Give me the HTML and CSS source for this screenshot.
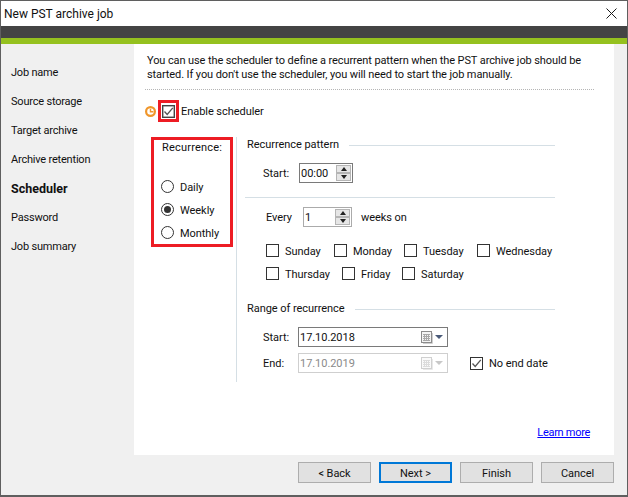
FILE: index.html
```html
<!DOCTYPE html>
<html lang="en">
<head>
<meta charset="utf-8">
<title>New PST archive job</title>
<link rel="stylesheet" href="styles.css">
</head>
<body>
<div class="window">
  <header class="titlebar">
    <span class="title">New PST archive job</span>
    <svg class="close" width="11" height="11" viewBox="0 0 11 11"><path d="M0.5 0.5L10.5 10.5M10.5 0.5L0.5 10.5" stroke="#1a1a1a" stroke-width="1" fill="none"/></svg>
  </header>
  <div class="band"></div>
  <div class="accent"></div>
  <div class="main">
    <nav class="sidebar">
      <div class="nav-item">Job name</div>
      <div class="nav-item">Source storage</div>
      <div class="nav-item">Target archive</div>
      <div class="nav-item">Archive retention</div>
      <div class="nav-item nav-active">Scheduler</div>
      <div class="nav-item">Password</div>
      <div class="nav-item">Job summary</div>
    </nav>
    <section class="content">
      <p class="intro">You can use the scheduler to define a recurrent pattern when the PST archive job should be<br>started. If you don't use the scheduler, you will need to start the job manually.</p>
      <div class="dotted"></div>
      <div class="enable-row">
        <svg class="clock" width="11" height="11" viewBox="0 0 11 11"><circle cx="5.5" cy="5.5" r="4.4" fill="none" stroke="#f0962a" stroke-width="2.2"/><path d="M5.5 2.8V5.7H8.4" fill="none" stroke="#f0962a" stroke-width="1.4"/></svg>
        <span class="red-check">
          <span class="check check-dark"><svg width="11" height="11" viewBox="0 0 11 11"><path d="M1.5 5.5L4.2 8.5L9.8 1.8" fill="none" stroke="#555" stroke-width="1.3"/></svg></span>
        </span>
        <span class="enable-label txt">Enable scheduler</span>
      </div>
      <div class="scheduler">
        <div class="recurrence">
          <div class="rec-title">Recurrence:</div>
          <div class="radio-row"><span class="radio"></span><span class="txt">Daily</span></div>
          <div class="radio-row"><span class="radio radio-on"></span><span class="txt">Weekly</span></div>
          <div class="radio-row"><span class="radio"></span><span class="txt">Monthly</span></div>
        </div>
        <div class="vline"></div>
        <div class="form">
          <div class="head"><span class="txt">Recurrence pattern</span><span class="head-line"></span></div>
          <div class="start-row">
            <span class="start-label txt">Start:</span>
            <span class="spin spin-time"><span class="spin-value txt">00:00</span><span class="spin-btns"><span class="spin-btn"><i class="tri-up"></i></span><span class="spin-btn"><i class="tri-down"></i></span></span></span>
          </div>
          <div class="rule"></div>
          <div class="every-row">
            <span class="every-label txt">Every</span>
            <span class="spin spin-num"><span class="spin-value txt">1</span><span class="spin-btns"><span class="spin-btn"><i class="tri-up"></i></span><span class="spin-btn"><i class="tri-down"></i></span></span></span>
            <span class="weeks txt">weeks on</span>
          </div>
          <div class="days days-first">
            <label class="day w68"><span class="check"></span><span class="txt">Sunday</span></label>
            <label class="day w70"><span class="check"></span><span class="txt">Monday</span></label>
            <label class="day w73"><span class="check"></span><span class="txt">Tuesday</span></label>
            <label class="day"><span class="check"></span><span class="txt">Wednesday</span></label>
          </div>
          <div class="days days-second">
            <label class="day w76"><span class="check"></span><span class="txt">Thursday</span></label>
            <label class="day w60"><span class="check"></span><span class="txt">Friday</span></label>
            <label class="day"><span class="check"></span><span class="txt">Saturday</span></label>
          </div>
          <div class="head head-range"><span class="txt">Range of recurrence</span><span class="head-line"></span></div>
          <div class="date-row date-first">
            <span class="date-label txt">Start:</span>
            <span class="date"><span class="date-text txt">17.10.2018</span>
              <svg class="cal" width="12" height="13" viewBox="0 0 12 13"><rect x="0.5" y="0.5" width="10" height="11" fill="#f4f4f4" stroke="#8c8c8c"/><path d="M2 3.5H9M2 5.5H9M2 7.5H9M2 9.5H9M3.5 3V10M5.5 3V10M7.5 3V10" stroke="#a8a8a8" stroke-width="1" fill="none"/><path d="M11.5 2V12.5H2" stroke="#cfcfcf" fill="none"/></svg>
              <i class="date-arrow"></i></span>
          </div>
          <div class="date-row date-second">
            <span class="date-label txt">End:</span>
            <span class="date date-off"><span class="date-text txt">17.10.2019</span>
              <svg class="cal" width="12" height="13" viewBox="0 0 12 13"><rect x="0.5" y="0.5" width="10" height="11" fill="#fafafa" stroke="#d0d0d0"/><path d="M2 3.5H9M2 5.5H9M2 7.5H9M2 9.5H9M3.5 3V10M5.5 3V10M7.5 3V10" stroke="#dcdcdc" stroke-width="1" fill="none"/><path d="M11.5 2V12.5H2" stroke="#e8e8e8" fill="none"/></svg>
              <i class="date-arrow"></i></span>
            <label class="no-end"><span class="check"><svg width="11" height="11" viewBox="0 0 11 11"><path d="M1.5 5.5L4.2 8.5L9.8 1.8" fill="none" stroke="#555" stroke-width="1.3"/></svg></span><span class="txt">No end date</span></label>
          </div>
        </div>
      </div>
      <a class="learn" href="#">Learn more</a>
    </section>
  </div>
  <footer class="footer">
    <button class="btn">&lt; Back</button>
    <button class="btn btn-default">Next &gt;</button>
    <button class="btn">Finish</button>
    <button class="btn">Cancel</button>
  </footer>
</div>
</body>
</html>
```
FILE: styles.css
```css
* { box-sizing: border-box; }
html, body { margin: 0; padding: 0; }
body { font: 11px/14px Roboto, "Noto Sans", sans-serif; letter-spacing: -0.05px; color: #111; background: #f0f0f0; }
.txt { padding-top: 2px; }
.window { width: 628px; height: 497px; border: 1px solid #5f5f5f; border-width: 1px 1px 2px 1px; display: flex; flex-direction: column; background: #f0f0f0; overflow: hidden; }
.titlebar { height: 25px; background: #fff; display: flex; align-items: center; justify-content: space-between; padding: 0 10px 0 3px; flex: none; }
.title { font-size: 12px; letter-spacing: 0; }
.close { display: block; }
.band { height: 12px; background: #444; flex: none; }
.accent { height: 6px; background: #95c11f; flex: none; }
.main { display: flex; height: 411px; flex: none; }
.sidebar { width: 133px; flex: none; padding: 22px 0 0 10px; letter-spacing: -0.2px; }
.nav-item { height: 29px; line-height: 14px; }
.nav-active { font-weight: 700; font-size: 12.5px; letter-spacing: 0; }
.content { width: 480px; background: #fff; flex: none; padding: 10px 0 0 0; display: flex; flex-direction: column; }
.intro { margin: 0 0 0 13px; line-height: 14px; white-space: nowrap; letter-spacing: -0.1px; }
.dotted { margin: 7px 20px 0 11px; height: 1px; border-top: 1px dotted #b5b5b5; }
.enable-row { display: flex; align-items: center; margin: 10px 0 0 11px; height: 22px; }
.clock { display: block; }
.red-check { width: 21px; height: 22px; border: 3px solid #ed1c24; margin-left: 2px; display: flex; align-items: center; justify-content: center; }
.enable-label { margin-left: 2px; }
.check { width: 13px; height: 13px; border: 1px solid #333; background: #fff; display: inline-flex; align-items: center; justify-content: center; flex: none; }
.check-dark { border-color: #444; box-shadow: inset 0 0 0 0.5px #666; }
.check svg { display: block; }
.scheduler { display: flex; margin: 15px 0 0 17px; }
.recurrence { width: 82px; height: 110px; border: 3px solid #ed1c24; flex: none; padding-left: 7px; }
.rec-title { margin: 0 0 20px 1px; padding-top: 1px; letter-spacing: 0.2px; }
.radio-row { display: flex; align-items: center; gap: 6px; height: 23px; white-space: nowrap; }
.radio { width: 13px; height: 13px; border: 1px solid #333; border-radius: 50%; background: #fff; display: block; flex: none; position: relative; }
.radio-on::after { content: ""; position: absolute; left: 2px; top: 2px; width: 7px; height: 7px; border-radius: 50%; background: #333; }
.vline { width: 1px; height: 245px; background: #d5dfe5; margin-left: 3px; flex: none; }
.form { margin-left: 10px; width: 308px; flex: none; }
.head { display: flex; align-items: center; height: 14px; }
.head-line { flex: 1; height: 1px; background: #d5dfe5; margin: 2px 0 0 10px; }
.start-row { display: flex; align-items: center; margin: 12px 0 0 16px; height: 20px; }
.start-label { width: 36px; flex: none; }
.spin { display: inline-flex; height: 20px; border: 1px solid #7a7a7a; background: #fff; align-items: center; justify-content: space-between; padding: 0 1px 0 1px; flex: none; }
.spin-time { width: 54px; }
.spin-num { width: 49px; border-color: #ababab; }
.spin-btns { display: flex; flex-direction: column; gap: 0; }
.spin-btn { width: 15px; height: 8px; background: #e6e6e6; border: 1px solid #b5b5b5; display: flex; align-items: center; justify-content: center; }
.tri-up { width: 0; height: 0; border: 3.5px solid transparent; border-top: 0; border-bottom: 4px solid #222; }
.tri-down { width: 0; height: 0; border: 3.5px solid transparent; border-bottom: 0; border-top: 4px solid #222; }
.rule { height: 1px; background: #d5dfe5; margin: 14px 0 0 -2px; }
.every-row { display: flex; align-items: center; margin: 9px 0 0 19px; height: 20px; }
.every-label { width: 37px; flex: none; }
.weeks { margin-left: 9px; }
.days { display: flex; margin-left: 19px; height: 13px; }
.days-first { margin-top: 17px; }
.days-second { margin-top: 10px; }
.day { display: flex; align-items: center; gap: 6px; flex: none; }
.w68 { width: 68px; }
.w70 { width: 70px; }
.w73 { width: 73px; }
.w76 { width: 76px; }
.w60 { width: 60px; }
.head-range { margin-top: 21px; }
.date-row { display: flex; align-items: center; margin-left: 16px; height: 20px; }
.date-first { margin-top: 12px; }
.date-second { margin-top: 6px; }
.date-label { width: 35px; flex: none; }
.date { width: 150px; height: 20px; border: 1px solid #7a7a7a; display: flex; align-items: center; padding: 0 4px 0 1px; background: #fff; flex: none; }
.date-text { flex: 1; }
.cal { display: block; margin-right: 1px; }
.date-arrow { width: 0; height: 0; border: 4px solid transparent; border-bottom: 0; border-top: 4px solid #4a5a78; margin-left: 1px; }
.date-off { border-color: #cfcfcf; color: #8a8a8a; }
.date-off .date-arrow { border-top-color: #c8c8c8; }
.no-end { display: flex; align-items: center; gap: 6px; margin-left: 22px; white-space: nowrap; }
.learn { color: #0000ff; text-decoration: underline; align-self: flex-end; margin: auto 24px 15px 0; letter-spacing: -0.3px; }
.footer { flex: 1; display: flex; justify-content: flex-end; gap: 8px; padding: 7px 13px 0 0; }
.btn { width: 73px; height: 21px; background: #e1e1e1; border: 1px solid #adadad; font: inherit; letter-spacing: inherit; color: #111; padding: 2px 0 0; }
.btn-default { border: 2px solid #0078d7; }
```
